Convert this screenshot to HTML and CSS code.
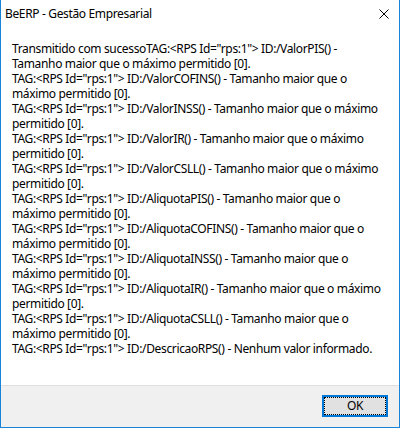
FILE: index.html
```html
<!DOCTYPE html>
<html lang="pt">
<head>
<meta charset="utf-8">
<title>BeERP - Gestão Empresarial</title>
<link rel="stylesheet" href="styles.css">
</head>
<body>
<div class="window">
  <div class="titlebar">
    <span class="title">BeERP - Gestão Empresarial</span>
    <svg class="close" width="10" height="10" viewBox="0 0 10 10"><path d="M0.5 0.5 L9.5 9.5 M9.5 0.5 L0.5 9.5" stroke="#000" stroke-width="1" fill="none"/></svg>
  </div>
  <div class="content">
    <p class="message">Transmitido com sucessoTAG:&lt;RPS Id="rps:1"&gt; ID:/ValorPIS() -<br>Tamanho maior que o máximo permitido [0].<br>TAG:&lt;RPS Id="rps:1"&gt; ID:/ValorCOFINS() - Tamanho maior que o<br>máximo permitido [0].<br>TAG:&lt;RPS Id="rps:1"&gt; ID:/ValorINSS() - Tamanho maior que o máximo<br>permitido [0].<br>TAG:&lt;RPS Id="rps:1"&gt; ID:/ValorIR() - Tamanho maior que o máximo<br>permitido [0].<br>TAG:&lt;RPS Id="rps:1"&gt; ID:/ValorCSLL() - Tamanho maior que o máximo<br>permitido [0].<br>TAG:&lt;RPS Id="rps:1"&gt; ID:/AliquotaPIS() - Tamanho maior que o<br>máximo permitido [0].<br>TAG:&lt;RPS Id="rps:1"&gt; ID:/AliquotaCOFINS() - Tamanho maior que o<br>máximo permitido [0].<br>TAG:&lt;RPS Id="rps:1"&gt; ID:/AliquotaINSS() - Tamanho maior que o<br>máximo permitido [0].<br>TAG:&lt;RPS Id="rps:1"&gt; ID:/AliquotaIR() - Tamanho maior que o máximo<br>permitido [0].<br>TAG:&lt;RPS Id="rps:1"&gt; ID:/AliquotaCSLL() - Tamanho maior que o<br>máximo permitido [0].<br>TAG:&lt;RPS Id="rps:1"&gt; ID:/DescricaoRPS() - Nenhum valor informado.</p>
  </div>
  <div class="footer">
    <button class="btn" type="button">OK</button>
  </div>
</div>
</body>
</html>
```

FILE: styles.css
```css
* { box-sizing: border-box; }
html, body { margin: 0; padding: 0; background: #fff; }
body {
  width: 400px;
  height: 428px;
  font-family: "Noto Sans", "DejaVu Sans", sans-serif;
  font-size: 12px;
  letter-spacing: -0.35px;
  color: #000;
}
.window {
  width: 400px;
  height: 428px;
  display: flex;
  flex-direction: column;
  border-left: 1px solid #1883d7;
  border-right: 1px solid #1883d7;
  border-bottom: 1px solid #1883d7;
  background: #fff;
}
.titlebar {
  height: 30px;
  display: flex;
  align-items: center;
  justify-content: space-between;
  padding: 0 10px 2px 4px;
}
.title { line-height: 16px; }
.close { display: block; }
.content {
  flex: 1;
  padding: 11px 8px 0 11px;
}
.message {
  margin: 0;
  line-height: 15px;
  white-space: nowrap;
}
.footer {
  height: 42px;
  border-top: 1px solid #dfdfdf;
  background: #f0f0f0;
  display: flex;
  justify-content: flex-end;
  align-items: flex-start;
  padding: 9px 11px 0 0;
}
.btn {
  position: relative;
  width: 66px;
  height: 22px;
  border: 2px solid #0078d7;
  background: #e1e1e1;
  font-family: inherit;
  font-size: 12px;
  letter-spacing: inherit;
  color: #000;
  padding: 0;
  margin: 0;
  line-height: 16px;
}
.btn::after {
  content: "";
  position: absolute;
  inset: 0;
  border: 1px dotted #000;
}
```
